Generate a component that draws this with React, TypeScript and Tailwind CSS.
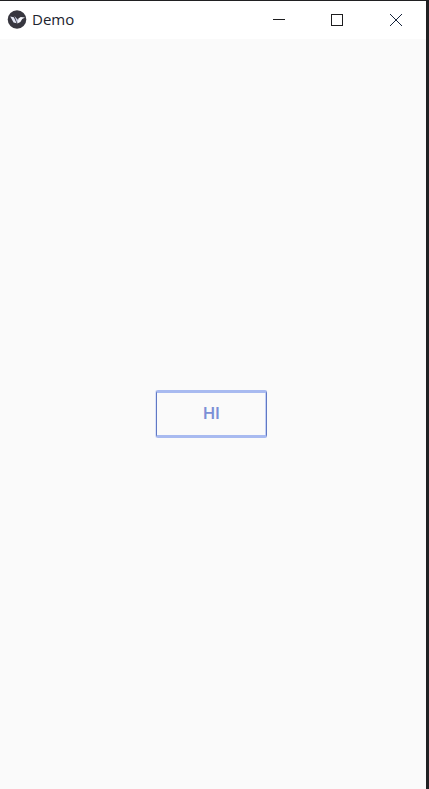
import type { ReactNode } from "react";

function AppLogo() {
  return (
    <svg className="size-5" viewBox="0 0 20 20" aria-hidden="true">
      <circle cx="10" cy="9.5" r="9.3" fill="#37363f" />
      <path d="M3.2 6.4l3.6.8 2.8 6-3-.6z" fill="#e4e7f5" />
      <path d="M7.4 6l4 4.2-1 3.2z" fill="#cbd0e6" />
      <path d="M10.4 13.4l1-5 2.4-1.4 4.2.4-2.8 1.6-1.8 3z" fill="#f4f5fb" />
    </svg>
  );
}

function WindowButton({ label, children }: { label: string; children: ReactNode }) {
  return (
    <button
      type="button"
      aria-label={label}
      className="flex h-full w-[58px] items-center justify-center text-[#1d1d1f]"
    >
      <svg
        className="size-3 overflow-visible"
        viewBox="0 0 12 12"
        fill="none"
        stroke="currentColor"
        shapeRendering="crispEdges"
      >
        {children}
      </svg>
    </button>
  );
}

function TitleBar() {
  return (
    <header className="flex h-[38px] shrink-0 items-center bg-white pl-[7px]">
      <AppLogo />
      <h1 className="ml-[5px] pb-0.5 font-['Open_Sans','Noto_Sans',sans-serif] text-[15px] leading-5 text-[#20232e]">
        Demo
      </h1>
      <div className="ml-auto flex h-full pr-0.5">
        <WindowButton label="Minimize">
          <path d="M0 5.5h12" />
        </WindowButton>
        <WindowButton label="Maximize">
          <path d="M.5 .5h11v11H.5z" />
        </WindowButton>
        <WindowButton label="Close">
          <path d="M1 0l12 12M13 0L1 12" stroke="#16243c" shapeRendering="auto" />
        </WindowButton>
      </div>
    </header>
  );
}

export default function App() {
  return (
    <div className="flex min-h-screen flex-col border-t border-r-[3px] border-t-[#202022] border-r-[#202022] bg-[#fafafa]">
      <TitleBar />
      <main className="flex flex-1 items-center justify-center pr-[3px]">
        <button
          type="button"
          className="h-12 w-[111px] rounded-[2px] border-x border-y-[3px] border-x-[#5f78c4] border-y-[#a8baf0] font-[Roboto,sans-serif] text-[17px] font-medium text-[#7b8fd6] shadow-[-1px_0_#dbe2f8,inset_-1px_0_#c3cff5]"
        >
          HI
        </button>
      </main>
    </div>
  );
}
